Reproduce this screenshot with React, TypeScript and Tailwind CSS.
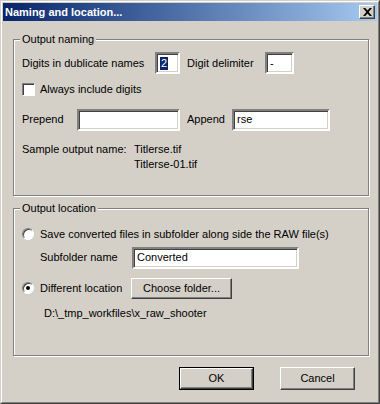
import React from 'react'

const font = { fontFamily: '"Liberation Sans", Arial, sans-serif' }

function TextBox({ width, value, selected }: { width: string; value?: string; selected?: boolean }) {
  return (
    <div
      className={`${width} h-[22px] bg-white border-2 border-t-[#808080] border-l-[#808080] border-b-white border-r-white shadow-[inset_1px_1px_0_#404040,inset_-1px_-1px_0_#d4d0c8] flex items-center pl-[3px] text-[11px] text-black`}
    >
      {selected ? <span className="bg-[#0a246a] text-white px-[1px] leading-[13px]">{value}</span> : value}
    </div>
  )
}

function Button({ label, width, isDefault }: { label: string; width: string; isDefault?: boolean }) {
  return (
    <div className={`${width} ${isDefault ? 'border border-black' : ''} flex`}>
      <div className="flex-1 bg-[#d4d0c8] border border-t-white border-l-white border-b-[#404040] border-r-[#404040] shadow-[inset_-1px_-1px_0_#808080] flex items-center justify-center text-[11px] text-black">
        {label}
      </div>
    </div>
  )
}

function Radio({ checked }: { checked?: boolean }) {
  return (
    <div className="w-[12px] h-[12px] rounded-full bg-white border border-t-[#808080] border-l-[#808080] border-b-white border-r-white shadow-[inset_1px_1px_0_#404040] flex items-center justify-center">
      {checked && <div className="w-[4px] h-[4px] rounded-full bg-black" />}
    </div>
  )
}

function Group({ title, className, children }: { title: string; className: string; children: React.ReactNode }) {
  return (
    <div className={`relative border border-[#808080] shadow-[inset_1px_1px_0_#fff,1px_1px_0_#fff] ${className}`}>
      <span className="absolute -top-[8px] left-[6px] px-[2px] bg-[#d4d0c8] text-[11px] leading-[14px] text-black">{title}</span>
      {children}
    </div>
  )
}

export default function App() {
  return (
    <div className="w-[380px] h-[404px] bg-[#d4d0c8] text-black" style={font}>
      <div className="w-[380px] h-[404px] border border-t-[#d4d0c8] border-l-[#d4d0c8] border-b-[#404040] border-r-[#404040]">
        <div className="h-full border border-t-white border-l-white border-b-[#808080] border-r-[#808080] p-[1px] flex flex-col">
          {/* title bar */}
          <div className="h-[18px] bg-gradient-to-r from-[#0a246a] to-[#a6caf0] flex items-center justify-between pl-[2px] pr-[2px]">
            <span className="text-white font-bold text-[11px]">Naming and location...</span>
            <div className="w-[16px] h-[14px] bg-[#d4d0c8] border border-t-white border-l-white border-b-[#404040] border-r-[#404040] shadow-[inset_-1px_-1px_0_#808080] flex items-center justify-center">
              <svg width="9" height="8" viewBox="0 0 9 8">
                <path d="M0 0h2.2l2.3 2.6L6.8 0H9L5.6 4 9 8H6.8L4.5 5.4 2.2 8H0l3.4-4z" fill="#000" />
              </svg>
            </div>
          </div>

          <div className="pl-[10px] pr-[8px] pt-[18px]">
            <Group title="Output naming" className="h-[157px] pl-[8px]">
              <div className="flex items-center pt-[12px] text-[11px]">
                <span className="w-[133px]">Digits in dublicate names</span>
                <TextBox width="w-[25px]" value="2" selected />
                <span className="ml-[7px] w-[78px]">Digit delimiter</span>
                <TextBox width="w-[29px]" value="-" />
              </div>
              <div className="flex items-center mt-[7px] text-[11px]">
                <div className="w-[13px] h-[13px] bg-white border border-t-[#808080] border-l-[#808080] border-b-white border-r-white shadow-[inset_1px_1px_0_#404040]" />
                <span className="ml-[5px]">Always include digits</span>
              </div>
              <div className="flex items-center mt-[11px] text-[11px]">
                <span className="w-[55px]">Prepend</span>
                <TextBox width="w-[103px]" />
                <span className="ml-[7px] w-[45px]">Append</span>
                <TextBox width="w-[98px]" value="rse" />
              </div>
              <div className="flex mt-[11px] text-[11px] leading-[15px]">
                <span className="w-[112px]">Sample output name:</span>
                <div className="flex flex-col">
                  <span>Titlerse.tif</span>
                  <span>Titlerse-01.tif</span>
                </div>
              </div>
            </Group>

            <Group title="Output location" className="mt-[12px] h-[148px] pl-[8px]">
              <div className="flex items-center pt-[17px] text-[11px]">
                <Radio />
                <span className="ml-[6px]">Save converted files in subfolder along side the RAW file(s)</span>
              </div>
              <div className="flex items-center mt-[4px] pl-[18px] text-[11px]">
                <span className="w-[92px]">Subfolder name</span>
                <TextBox width="w-[167px]" value="Converted" />
              </div>
              <div className="flex items-center mt-[9px] text-[11px]">
                <Radio checked />
                <span className="ml-[6px] w-[91px]">Different location</span>
                <Button label="Choose folder..." width="w-[101px] h-[21px]" />
              </div>
              <div className="mt-[6px] pl-[22px] text-[11px]">D:\_tmp_workfiles\x_raw_shooter</div>
            </Group>

            <div className="flex justify-end gap-[26px] mt-[11px] pr-[14px]">
              <Button label="OK" width="w-[75px] h-[23px]" isDefault />
              <Button label="Cancel" width="w-[75px] h-[23px]" />
            </div>
          </div>
        </div>
      </div>
    </div>
  )
}
